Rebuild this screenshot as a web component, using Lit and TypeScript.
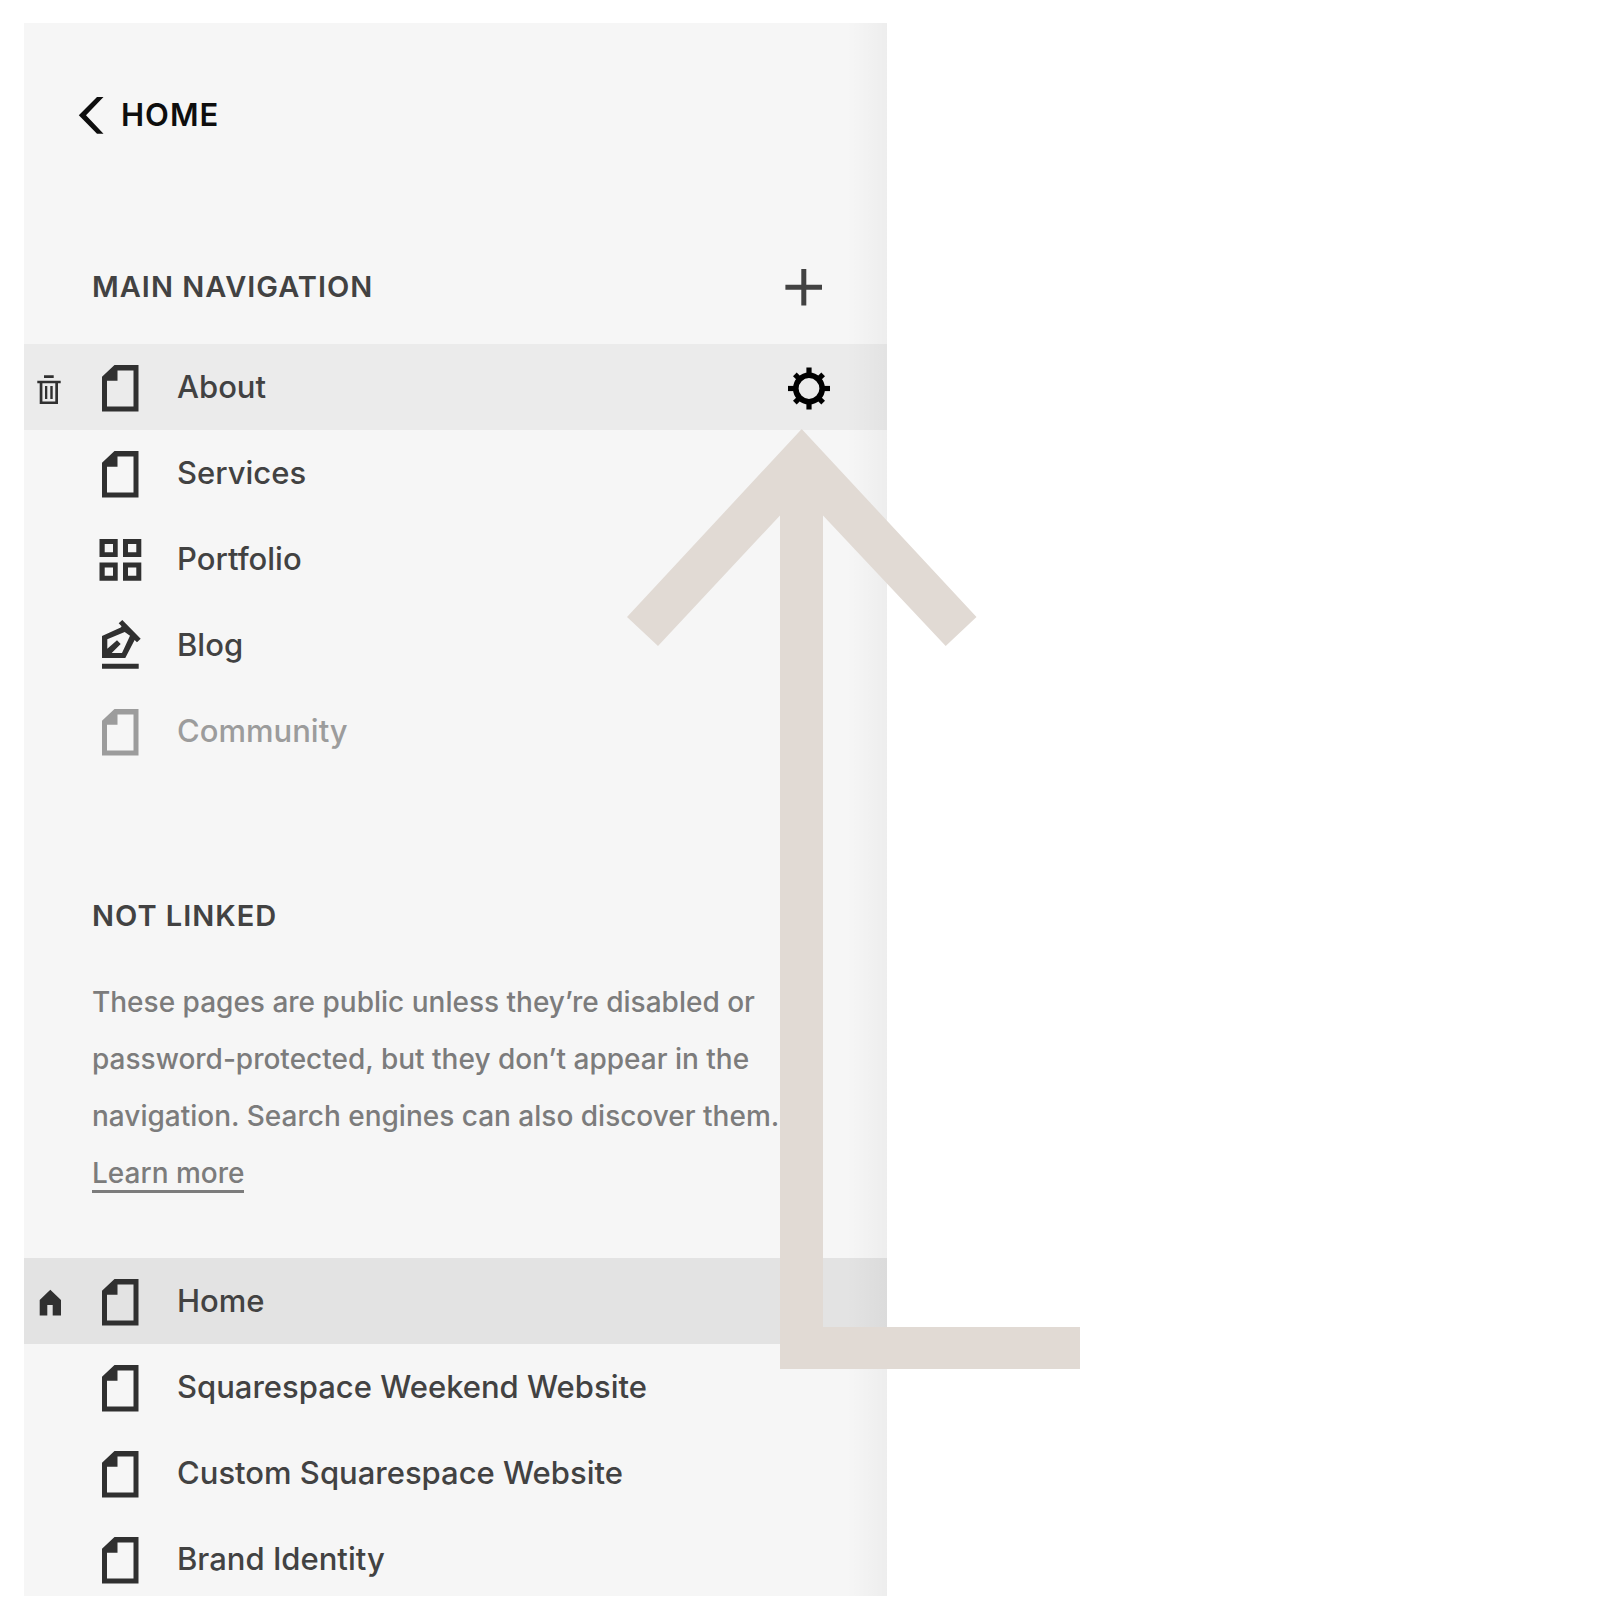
import { LitElement, html, svg, css, nothing } from "lit";
import { customElement } from "lit/decorators.js";
import { classMap } from "lit/directives/class-map.js";

type IconName = "page" | "grid" | "blog";

interface PageItem {
  label: string;
  icon: IconName;
  state?: "hovered" | "current" | "disabled";
}

const MAIN_PAGES: PageItem[] = [
  { label: "About", icon: "page", state: "hovered" },
  { label: "Services", icon: "page" },
  { label: "Portfolio", icon: "grid" },
  { label: "Blog", icon: "blog" },
  { label: "Community", icon: "page", state: "disabled" },
];

const UNLINKED_PAGES: PageItem[] = [
  { label: "Home", icon: "page", state: "current" },
  { label: "Squarespace Weekend Website", icon: "page" },
  { label: "Custom Squarespace Website", icon: "page" },
  { label: "Brand Identity", icon: "page" },
];

const ICON_PATHS: Record<IconName, string> = {
  page: "M6 14.7 18.5 3H42.5V49.5H6ZM21.5 8.5V18.7H11V44.5H37.5V8.5Z",
  grid:
    "M3.5 5H21.7V23H3.5ZM8.7 10V18.2H17V10ZM27 5H45.3V23H27ZM32 10V18.2H40.3V10Z" +
    "M3.5 28.4H21.7V46.7H3.5ZM8.7 33.5V41.7H17V33.5ZM27 28.4H45.3V46.7H27ZM32 33.5V41.7H40.3V33.5Z",
  blog:
    "M26.3 0 44.7 18.7 41 22.3 38.6 20 29.3 38H6V16L24.7 7.5 25.6 6.2 22.7 3.3Z" +
    "M11.3 19.3V28.7L21 20.3 24.7 24 15.7 33H26L34 15.8 28.7 12ZM6 43.7H42.7V48.7H6Z",
};

@customElement("app-root")
export class AppRoot extends LitElement {
  static styles = css`
    :host {
      display: block;
      font-family: Inter, "Liberation Sans", sans-serif;
      color: #424242;
      background: #fff;
    }
    .stage {
      box-sizing: border-box;
      min-height: 100vh;
      padding: 23px 24px 24px;
      overflow: hidden;
    }
    .panel {
      position: relative;
      width: 54.9%;
      background: #f6f6f6;
    }
    .panel::after {
      content: "";
      position: absolute;
      inset: 0 0 0 auto;
      width: 40px;
      background: linear-gradient(to right, transparent, rgba(0, 0, 0, 0.035));
      pointer-events: none;
    }
    .clip {
      overflow: hidden;
    }
    svg {
      display: block;
      fill: currentColor;
    }
    a {
      color: inherit;
      text-decoration: none;
    }
    button {
      display: block;
      padding: 0;
      border: 0;
      background: none;
      color: inherit;
      cursor: pointer;
    }
    h2 {
      margin: 0;
      font-size: 29px;
      line-height: 44px;
      font-weight: 600;
      letter-spacing: 1px;
    }
    .back {
      display: flex;
      align-items: center;
      gap: 17px;
      width: fit-content;
      padding: 68px 0 0 54px;
      color: #0e0e0e;
      font-size: 31px;
      line-height: 48px;
      font-weight: 600;
      letter-spacing: 1px;
    }
    .section-head {
      display: flex;
      align-items: center;
      justify-content: space-between;
      padding: 126px 62px 35px 68px;
    }
    .list {
      margin: 0;
      padding: 0;
      list-style: none;
    }
    .row {
      display: flex;
      align-items: center;
      height: 86px;
      padding: 0 57px 0 12px;
    }
    .hovered {
      background: #ebebeb;
    }
    .current {
      background: #e3e3e3;
    }
    .side {
      flex: none;
      width: 26px;
      margin-right: 34px;
      color: #303030;
    }
    .link {
      flex: 1;
      display: flex;
      align-items: center;
      gap: 33px;
      font-size: 31px;
      line-height: 40px;
      font-weight: 500;
    }
    .icon {
      flex: none;
      color: #303030;
    }
    .disabled .link,
    .disabled .icon {
      color: #9c9c9c;
    }
    .gear {
      color: #000;
    }
    .unlinked {
      padding: 120px 80px 56px 68px;
    }
    .note {
      margin: 36px 0 0;
      font-size: 28px;
      line-height: 57px;
      font-weight: 500;
      color: #7c7c7c;
    }
    .more {
      border-bottom: 3px solid #7c7c7c;
    }
    .last {
      margin-bottom: -6px;
    }
    .arrow {
      position: absolute;
      z-index: 1;
      top: 406px;
      right: -193px;
      fill: #e1dad4;
      pointer-events: none;
    }
  `;

  private renderSide(item: PageItem) {
    if (item.state === "hovered") {
      return html`<button aria-label="Delete ${item.label}">
        <svg width="26" height="34" viewBox="0 0 26 34">
          <path
            fill-rule="evenodd"
            d="M8 5.3H17.7V8H8ZM1.3 10.7H24.7V13.3H22V34H3.7V13.3H1.3ZM6.4 13.3V31.4H19.3V13.3ZM9 16H11.3V29H9ZM14.3 16H16.7V29H14.3Z"
          />
        </svg>
      </button>`;
    }
    if (item.state === "current") {
      return html`<svg width="26" height="34" viewBox="0 0 26 34" role="img" aria-label="Homepage">
        <path d="M14.3 5.7 25 16V31.4H16.7V21H11.3V31.4H3.7V16Z" />
      </svg>`;
    }
    return nothing;
  }

  private renderGear(item: PageItem) {
    const teeth = [0, 45, 90, 135, 180, 225, 270, 315];
    return html`<button class="gear" aria-label="${item.label} settings">
      <svg width="42" height="46" viewBox="0 0 42 46">
        <circle cx="21" cy="24.5" r="13.2" fill="none" stroke="currentColor" stroke-width="5.6" />
        ${teeth.map(
          (angle) => svg`<rect x="18.4" y=${angle % 90 ? 4.5 : 3.5} width="5.2" height="8" transform="rotate(${angle} 21 24.5)" />`
        )}
      </svg>
    </button>`;
  }

  private renderRow(item: PageItem) {
    const classes = { row: true, [item.state ?? "plain"]: true };
    return html`<li class=${classMap(classes)}>
      <div class="side">${this.renderSide(item)}</div>
      <a class="link" href="#">
        <svg class="icon" width="48" height="50" viewBox="0 0 48 50" aria-hidden="true">
          <path fill-rule="evenodd" d=${ICON_PATHS[item.icon]} />
        </svg>
        <span>${item.label}</span>
      </a>
      ${item.state === "hovered" ? this.renderGear(item) : nothing}
    </li>`;
  }

  render() {
    return html`<main class="stage">
      <div class="panel">
        <nav class="clip">
          <a class="back" href="#">
            <svg width="26" height="38" viewBox="0 0 26 38" aria-hidden="true">
              <path d="M19 1H25.5L8 19.3 25.5 37.7H19L0.8 19.3Z" />
            </svg>
            <span>HOME</span>
          </a>
          <div class="section-head">
            <h2>MAIN NAVIGATION</h2>
            <button aria-label="Add page">
              <svg width="42" height="44" viewBox="0 0 42 44">
                <path d="M18.3 4H23.3V19.7H39V24.7H23.3V40.5H18.3V24.7H2.4V19.7H18.3Z" />
              </svg>
            </button>
          </div>
          <ul class="list">
            ${MAIN_PAGES.map((item) => this.renderRow(item))}
          </ul>
          <div class="unlinked">
            <h2>NOT LINKED</h2>
            <p class="note">
              These pages are public unless they’re disabled or password-protected, but they don’t appear in the
              navigation. Search engines can also discover them. <a class="more" href="#">Learn&nbsp;more</a>
            </p>
          </div>
          <ul class="list last">
            ${UNLINKED_PAGES.map((item) => this.renderRow(item))}
          </ul>
        </nav>
        <svg class="arrow" width="453" height="940" viewBox="0 0 453 940" aria-hidden="true">
          <path d="M174.7 0 349.5 188 318.7 217 196 86.5V898H453V940H153V86.5L31 217 0 188Z" />
        </svg>
      </div>
    </main>`;
  }
}
